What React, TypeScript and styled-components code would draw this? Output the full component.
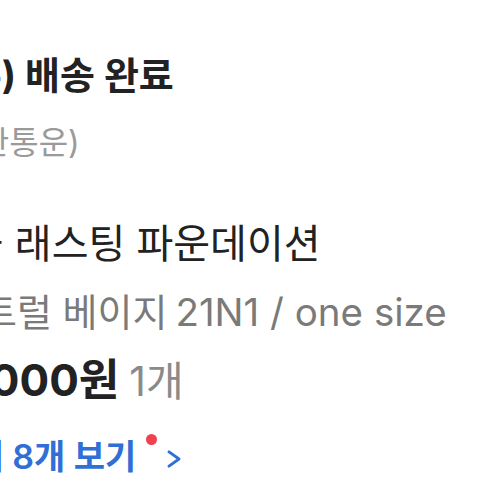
import React from 'react';
import styled, { createGlobalStyle } from 'styled-components';

const GlobalStyle = createGlobalStyle`
  html, body {
    margin: 0;
    padding: 0;
    background: #ffffff;
    overflow: hidden;
  }
  body {
    font-family: 'Inter', 'Noto Sans CJK KR', sans-serif;
    -webkit-font-smoothing: antialiased;
  }
`;

const order = {
  deliveredAt: '2/9(수)',
  carrier: '(CJ대한통운)',
  name: '더블 래스팅 파운데이션',
  optionColor: '뉴트럴 베이지',
  optionSize: '21N1 / one size',
  price: '13,000원',
  quantity: '1개',
  itemCount: 8,
};

const App = () => {
  return (
    <>
      <GlobalStyle />
      <Page>
        <Header>
          <DeliveryTitle>{order.deliveredAt} 배송 완료</DeliveryTitle>
          <Carrier>{order.carrier}</Carrier>
        </Header>
        <ProductInfo>
          <ProductName>{order.name}</ProductName>
          <OptionRow>
            <span>{order.optionColor}</span>
            <OptionSize>{order.optionSize}</OptionSize>
          </OptionRow>
          <PriceRow>
            <Price>{order.price}</Price>
            <Quantity>{order.quantity}</Quantity>
          </PriceRow>
          <MoreLink>
            전체 {order.itemCount}개 보기
            <NewDot />
            <Chevron viewBox="0 0 14 18" fill="none">
              <path d="M2 1.8 L12 9 L2 16.2" stroke="currentColor" strokeWidth="2.8" strokeLinecap="round" strokeLinejoin="round" />
            </Chevron>
          </MoreLink>
        </ProductInfo>
      </Page>
    </>
  );
};

export default App;

const Page = styled.div`
  width: 495px;
  height: 495px;
  overflow: hidden;
  display: flex;
  flex-direction: column;
`;

const Header = styled.div`
  display: flex;
  flex-direction: column;
  padding-top: 51px;
  margin-left: -111px;
  white-space: nowrap;
`;

const DeliveryTitle = styled.div`
  font-size: 38px;
  line-height: 48px;
  font-weight: 700;
  color: #222222;
`;

const Carrier = styled.div`
  margin-top: 24px;
  padding-left: 8px;
  font-size: 32px;
  line-height: 40px;
  color: #9a9a9a;
`;

const ProductInfo = styled.div`
  display: flex;
  flex-direction: column;
  margin-top: 47px;
  margin-left: -70px;
  white-space: nowrap;
`;

const ProductName = styled.div`
  font-size: 40px;
  line-height: 68px;
  color: #222222;
`;

const OptionRow = styled.div`
  display: flex;
  align-items: baseline;
  gap: 8px;
  padding-left: 17px;
  font-size: 38px;
  line-height: 68px;
  color: #7a7a7a;
`;

const OptionSize = styled.span`
  font-size: 38.5px;
`;

const PriceRow = styled.div`
  display: flex;
  align-items: baseline;
  gap: 10px;
  line-height: 68px;
`;

const Price = styled.span`
  font-size: 44px;
  font-weight: 700;
  color: #222222;
`;

const Quantity = styled.span`
  font-size: 41px;
  color: #8a8a8a;
`;

const MoreLink = styled.div`
  display: flex;
  align-items: center;
  margin-top: 8px;
  padding-left: 11px;
  font-size: 34px;
  line-height: 68px;
  font-weight: 600;
  color: #2f6fd6;
`;

const NewDot = styled.span`
  align-self: flex-start;
  margin-top: 11px;
  margin-left: 10px;
  width: 11px;
  height: 11px;
  border-radius: 50%;
  background: #f2404f;
`;

const Chevron = styled.svg`
  width: 14px;
  height: 18px;
  margin-left: 10px;
  margin-top: 4px;
  color: #2f6fd6;
`;
